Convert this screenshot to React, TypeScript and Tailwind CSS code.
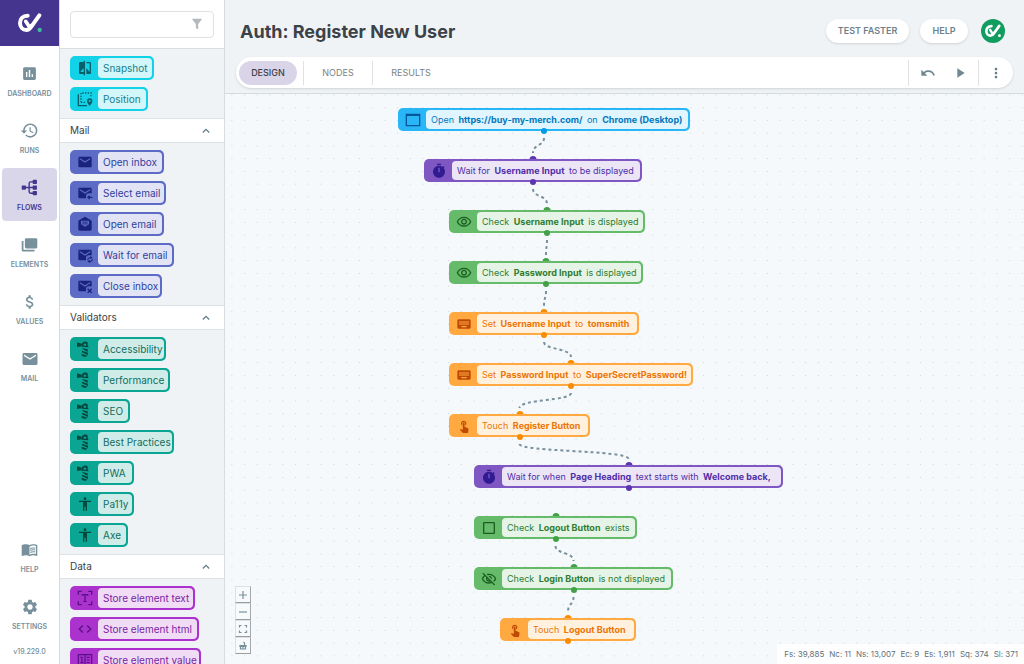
import type { ReactNode } from 'react'
import {
  MdAccessibility,
  MdAttachMoney,
  MdCheckBoxOutlineBlank,
  MdCode,
  MdCompare,
  MdHistory,
  MdInsertChart,
  MdKeyboard,
  MdMail,
  MdMenuBook,
  MdMoreVert,
  MdOutlineVisibility,
  MdOutlineVisibilityOff,
  MdPlayArrow,
  MdSettings,
  MdTouchApp,
  MdUndo,
} from 'react-icons/md'

function Svg({ children, className }: { children: ReactNode; className?: string }) {
  return (
    <svg viewBox="0 0 24 24" width="1em" height="1em" fill="currentColor" className={className} aria-hidden="true">
      {children}
    </svg>
  )
}

const FilterIcon = () => (
  <Svg>
    <path d="M14 12v7.9c0 .3-.1.6-.3.8-.4.4-1 .4-1.4 0l-2-2c-.2-.2-.3-.5-.3-.8V12L4.200 4.600C3.900 4.200 4 3.600 4.400 3.200c.2-.1.4-.2.6-.2h14c.2 0 .4.1.6.2.4.4.5 1 .2 1.400L14 12z" />
  </Svg>
)

const FlowsIcon = () => (
  <Svg>
    <rect x="1" y="9" width="6" height="6" rx="1" />
    <rect x="16.500" y="1" width="6" height="6" rx="1" />
    <rect x="16.500" y="9" width="6" height="6" rx="1" />
    <rect x="16.500" y="17" width="6" height="6" rx="1" />
    <path d="M6 12h11M17 4h-3.500q-2 0-2 2v12q0 2 2 2H17" fill="none" stroke="currentColor" strokeWidth="2" />
  </Svg>
)

const ElementsIcon = () => (
  <Svg>
    <rect x="5.500" y="3" width="17.500" height="14.500" rx="2" />
    <path d="M1 7h2.500v12.500h15.500V22H3q-2 0-2-2z" />
  </Svg>
)

const WindowIcon = () => (
  <Svg>
    <path d="M2 3.500h20v17H2zM2 5h20" fill="none" stroke="currentColor" strokeWidth="2" />
  </Svg>
)

const TimerIcon = () => (
  <Svg>
    <path d="M19.030 7.390l1.420-1.420c-.45-.51-.9-.97-1.410-1.410L17.620 6C16.070 4.740 14.120 4 12 4c-4.970 0-9 4.030-9 9s4.030 9 9 9c5 0 9-4.030 9-9 0-2.120-.74-4.070-1.970-5.610M13 14h-2V7h2v7m2-13H9v2h6V1z" />
  </Svg>
)

const PositionIcon = () => (
  <Svg>
    <path d="M2 5v17h13" fill="none" stroke="currentColor" strokeWidth="2" />
    <path d="M6 17V3h15v7M6 17h7" fill="none" stroke="currentColor" strokeWidth="2" strokeDasharray="2 2" />
    <path d="M19 11a4 4 0 0 0-4 4c0 3 4 7.500 4 7.500s4-4.500 4-7.500a4 4 0 0 0-4-4m0 5.500a1.500 1.500 0 1 1 0-3 1.500 1.500 0 0 1 0 3" />
  </Svg>
)

const ENVELOPE = 'M20 4H4a2 2 0 0 0-2 2v12a2 2 0 0 0 2 2h9.500v-3.500a4 4 0 0 1 4-4H22V6a2 2 0 0 0-2-2m0 4-8 5-8-5V6l8 5 8-5z'

const SelectMailIcon = () => (
  <Svg>
    <path d={ENVELOPE} />
    <path d="M19 15v2.500h4v2h-4V22l-4-3.500z" />
  </Svg>
)

const WaitMailIcon = () => (
  <Svg>
    <path d={ENVELOPE} />
    <path d="M16 19.500a3.500 3.500 0 0 1 5-3M23 18a3.500 3.500 0 0 1-5 3.500" fill="none" stroke="currentColor" strokeWidth="1.600" />
    <path d="M20 13.500l3.500 2.500-3.500 2zM19 19l-3.500 2.500L19 24z" />
  </Svg>
)

const CloseMailIcon = () => (
  <Svg>
    <path d={ENVELOPE} />
    <path d="M16 16l6 6M22 16l-6 6" stroke="currentColor" strokeWidth="2.200" />
  </Svg>
)

const OpenMailIcon = () => (
  <Svg>
    <path
      fillRule="evenodd"
      d="M12 1 3 6.500Q2 7 2 8v12a2 2 0 0 0 2 2h16a2 2 0 0 0 2-2V8q0-1-1-1.500zM6 7h12v5.500L12 16 6 12.500zM8 8.500v1.300h8V8.500zm0 2.700v1.300h8v-1.300z"
    />
  </Svg>
)

const LighthouseIcon = () => (
  <Svg>
    <path d="M0 2 7 4v4L0 9z" />
    <path
      fillRule="evenodd"
      d="M7 4l2-2 3-1.500L16 2v5h1v2.500L7 8.500zM10 4v3h3.500V4z"
    />
    <path d="M8 10.500l8 2v4l-7-4zM7.500 14.500l9 3v3.500L7.500 17zM7 19l9 3-4 2-5-2z" />
  </Svg>
)

const TextIcon = () => (
  <Svg>
    <path d="M2 7V2h5M17 2h5v5M22 17v5h-5M7 22H2v-5" fill="none" stroke="currentColor" strokeWidth="2" />
    <path d="M7 6h10v3h-1.500l-.5-1h-2v8.500h1.500V18h-5v-1.500H11V8H9l-.5 1H7z" />
  </Svg>
)

const ValueIcon = () => (
  <Svg>
    <path d="M2 4h20v16H2zM12 4v16M5 8h2.500v8M5 16h5M14.500 8H19M14.500 12H19M14.500 16H19" fill="none" stroke="currentColor" strokeWidth="1.800" />
  </Svg>
)

function BrandMark({ className, dot }: { className?: string; dot: string }) {
  return (
    <svg viewBox="0 0 72 60" className={className} aria-hidden="true">
      <path
        d="M29 8C14 8 6 18 6 30c0 12 8 21 19 21 7 0 11-4 15-10L64 7"
        fill="none"
        stroke="#fff"
        strokeWidth="12"
        strokeLinecap="round"
        strokeLinejoin="round"
      />
      <path d="M23 25l8 12" fill="none" stroke="#fff" strokeWidth="11" strokeLinecap="round" />
      <path d="M28 40l10-8 4 6-10 12z" fill="#fff" />
      <circle cx="65" cy="51" r="6.500" fill={dot} />
    </svg>
  )
}

const NAV_TOP = [
  { label: 'DASHBOARD', icon: <MdInsertChart /> },
  { label: 'RUNS', icon: <MdHistory className="text-[19px]" /> },
  { label: 'FLOWS', icon: <FlowsIcon />, active: true },
  { label: 'ELEMENTS', icon: <ElementsIcon /> },
  { label: 'VALUES', icon: <MdAttachMoney className="text-lg" /> },
  { label: 'MAIL', icon: <MdMail className="text-lg" /> },
]

const NAV_BOTTOM = [
  { label: 'HELP', icon: <MdMenuBook /> },
  { label: 'SETTINGS', icon: <MdSettings className="text-lg" /> },
]

type Tone = { frame: string; body: string; icon: string }

const TONES: Record<string, Tone> = {
  cyan: { frame: 'bg-[#12d2e8]', body: 'bg-[#d2f6fa] text-[#17808a]', icon: 'text-[#075f69]' },
  indigo: { frame: 'bg-[#5c6bc5]', body: 'bg-[#e2e4f5] text-[#303f9f]', icon: 'text-[#1a237e]' },
  teal: { frame: 'bg-[#0aa593]', body: 'bg-[#cfece8] text-[#126d5d]', icon: 'text-[#05483f]' },
  magenta: { frame: 'bg-[#ab32cc]', body: 'bg-[#f0dcf5] text-[#7b1fa2]', icon: 'text-[#5a108a]' },
}

const SECTIONS = [
  {
    title: '',
    tone: 'cyan',
    items: [
      { label: 'Snapshot', icon: <MdCompare />, width: 'w-[84px]' },
      { label: 'Position', icon: <PositionIcon />, width: 'w-[78px]' },
    ],
  },
  {
    title: 'Mail',
    tone: 'indigo',
    items: [
      { label: 'Open inbox', icon: <MdMail />, width: 'w-[94px]' },
      { label: 'Select email', icon: <SelectMailIcon />, width: 'w-[96px]' },
      { label: 'Open email', icon: <OpenMailIcon />, width: 'w-[94px]' },
      { label: 'Wait for email', icon: <WaitMailIcon />, width: 'w-[104px]' },
      { label: 'Close inbox', icon: <CloseMailIcon />, width: 'w-[92px]' },
    ],
  },
  {
    title: 'Validators',
    tone: 'teal',
    items: [
      { label: 'Accessibility', icon: <LighthouseIcon />, width: 'w-[96px]' },
      { label: 'Performance', icon: <LighthouseIcon />, width: 'w-[100px]' },
      { label: 'SEO', icon: <LighthouseIcon />, width: 'w-[60px]' },
      { label: 'Best Practices', icon: <LighthouseIcon />, width: 'w-[104px]' },
      { label: 'PWA', icon: <LighthouseIcon />, width: 'w-[64px]' },
      { label: 'Pa11y', icon: <MdAccessibility />, width: 'w-[64px]' },
      { label: 'Axe', icon: <MdAccessibility />, width: 'w-[58px]' },
    ],
  },
  {
    title: 'Data',
    tone: 'magenta',
    items: [
      { label: 'Store element text', icon: <TextIcon />, width: 'w-[125px]' },
      { label: 'Store element html', icon: <MdCode />, width: 'w-[129px]' },
      { label: 'Store element value', icon: <ValueIcon />, width: 'w-[131px]' },
    ],
  },
]

const NODE_TONES: Record<string, Tone & { dot: string }> = {
  blue: { frame: 'bg-[#29b6f6]', body: 'bg-[#e1f5fe] text-[#0277bd]', icon: 'text-[#01579b]', dot: 'bg-[#039be5]' },
  purple: { frame: 'bg-[#7e57c2]', body: 'bg-[#ebe5f6] text-[#512da8]', icon: 'text-[#311b92]', dot: 'bg-[#5e35b1]' },
  green: { frame: 'bg-[#66bb6a]', body: 'bg-[#e6f4e7] text-[#2e7d32]', icon: 'text-[#1b5e20]', dot: 'bg-[#43a047]' },
  orange: { frame: 'bg-[#ffa940]', body: 'bg-[#fff1de] text-[#ec7505]', icon: 'text-[#bf4a04]', dot: 'bg-[#fb8c00]' },
}

// bold parts of a step are wrapped in asterisks
const NODES = [
  { text: 'Open *https://buy-my-merch.com/* on *Chrome (Desktop)*', tone: 'blue', icon: <WindowIcon />, x: 173, w: 292 },
  { text: 'Wait for *Username Input* to be displayed', tone: 'purple', icon: <TimerIcon />, x: 199, w: 218 },
  { text: 'Check *Username Input* is displayed', tone: 'green', icon: <MdOutlineVisibility />, x: 224, w: 196 },
  { text: 'Check *Password Input* is displayed', tone: 'green', icon: <MdOutlineVisibility />, x: 224, w: 194 },
  { text: 'Set *Username Input* to *tomsmith*', tone: 'orange', icon: <MdKeyboard />, x: 224, w: 190 },
  { text: 'Set *Password Input* to *SuperSecretPassword!*', tone: 'orange', icon: <MdKeyboard />, x: 224, w: 244 },
  { text: 'Touch *Register Button*', tone: 'orange', icon: <MdTouchApp className="text-sm" />, x: 224, w: 141 },
  { text: 'Wait for when *Page Heading* text starts with *Welcome back,*', tone: 'purple', icon: <TimerIcon />, x: 249, w: 309, last: true },
  { text: 'Check *Logout Button* exists', tone: 'green', icon: <MdCheckBoxOutlineBlank />, x: 249, w: 163 },
  { text: 'Check *Login Button* is not displayed', tone: 'green', icon: <MdOutlineVisibilityOff />, x: 249, w: 199 },
  { text: 'Touch *Logout Button*', tone: 'orange', icon: <MdTouchApp className="text-sm" />, x: 275, w: 136, last: true },
]

const FIRST_TOP = 14
const ROW = 51

const STATS = ['Fs: 39,885', 'Nc: 11', 'Ns: 13,007', 'Ec: 9', 'Es: 1,911', 'Sq: 374', 'Sl: 371']

function NavItem({ label, icon, active }: { label: string; icon: ReactNode; active?: boolean }) {
  return (
    <a
      href="#"
      className={`mx-0.5 flex h-[53px] flex-col items-center justify-center gap-1.5 rounded ${active ? 'bg-[#dad6ea] text-[#45358f]' : 'text-[#78909c]'}`}
    >
      <span className="flex h-5 items-center text-[17px]">{icon}</span>
      <span className="text-[7px] leading-2 font-semibold">{label}</span>
    </a>
  )
}

function StepText({ text }: { text: string }) {
  return (
    <>
      {text.split('*').map((part, i) => (i % 2 ? <b key={i} className="mx-0.5 font-bold">{part}</b> : part))}
    </>
  )
}

function FlowCanvas() {
  return (
    <main className="relative min-h-0 flex-1 overflow-hidden bg-[#f5f9fc]">
      <svg className="absolute inset-0 h-full w-full" aria-hidden="true">
        <defs>
          <pattern id="dots" width="15" height="15" patternUnits="userSpaceOnUse" patternTransform="translate(.5 -5.500) scale(.85)">
            <circle cx="7.500" cy="7.500" r=".7" fill="#c6ced4" />
          </pattern>
        </defs>
        <rect width="100%" height="100%" fill="url(#dots)" />
        {NODES.slice(0, -1).map((n, i) => {
          if (n.last) return null
          const next = NODES[i + 1]
          const x1 = n.x + n.w / 2
          const x2 = next.x + next.w / 2
          const y = FIRST_TOP + i * ROW + 30
          return (
            <path
              key={n.text}
              d={`M${x1} ${y}C${x1} ${y + 8} ${x2} ${y + 6} ${x2} ${y + 15}`}
              fill="none"
              stroke="#78909c"
              strokeWidth="2"
              strokeDasharray="3 3"
            />
          )
        })}
      </svg>
      {NODES.map((n, i) => {
        const tone = NODE_TONES[n.tone]
        return (
          <div key={n.text} className="absolute" style={{ left: n.x, top: FIRST_TOP + i * ROW, width: n.w }}>
            {i > 0 && <span className={`absolute -top-[3px] left-1/2 size-[7px] -translate-x-1/2 rounded-full ${tone.dot}`} />}
            <div className={`relative flex h-[23px] rounded-[5px] p-0.5 ${tone.frame}`}>
              <span className={`flex w-[26px] shrink-0 items-center justify-center text-base ${tone.icon}`}>{n.icon}</span>
              <span className={`flex flex-1 items-center rounded pl-[5px] text-[9px] whitespace-pre ${tone.body}`}>
                <StepText text={n.text} />
              </span>
            </div>
            <span className={`absolute -bottom-[3px] left-1/2 size-1.5 -translate-x-1/2 rounded-full ${tone.dot}`} />
          </div>
        )
      })}

      <div className="absolute bottom-2.5 left-2.5 flex flex-col text-[#78909c]">
        {[
          { name: 'Zoom in', d: 'M12 4v16M4 12h16' },
          { name: 'Zoom out', d: 'M4 12h16' },
          { name: 'Fit view', d: 'M5 9V5h4M15 5h4v4M19 15v4h-4M9 19H5v-4' },
          { name: 'Lock', d: 'M6 11h12v2H6zM6 18h12M7 13v5M17 13v5M12 14v3M15 11V6l-2-2' },
        ].map(c => (
          <button
            key={c.name}
            aria-label={c.name}
            className="flex h-[17px] w-4 items-center justify-center border border-t-[#dde0e2] border-r-[#a5a8aa] border-b-[#9a9da0] border-l-[#dde0e2] bg-[#f7f9fa]"
          >
            <svg viewBox="0 0 24 24" className="size-3" fill="none" stroke="currentColor" strokeWidth="2.400">
              <path d={c.d} />
            </svg>
          </button>
        ))}
      </div>

      <div className="absolute right-0 bottom-0 flex h-5 items-center gap-[5px] bg-white/90 pr-1.5 pl-[7px] text-[8px] text-[#607078]">
        {STATS.map(s => <span key={s}>{s}</span>)}
      </div>
    </main>
  )
}

export default function App() {
  return (
    <div className="flex h-screen overflow-hidden bg-[#eff3f6] font-[Inter,'Open_Sans',sans-serif]">
      <nav className="flex w-[59px] shrink-0 flex-col bg-white">
        <a href="#" aria-label="Home" className="flex h-[46px] items-center justify-center bg-[#45358f]">
          <BrandMark className="h-5 w-6" dot="#3dbf9b" />
        </a>
        <div className="mt-2 flex flex-col gap-1">
          {NAV_TOP.map(n => <NavItem key={n.label} {...n} />)}
        </div>
        <div className="mt-auto flex flex-col gap-1">
          {NAV_BOTTOM.map(n => <NavItem key={n.label} {...n} />)}
        </div>
        <p className="h-6 pt-1.5 text-center text-[7px] leading-3 font-medium text-[#78909c]">v19.229.0</p>
      </nav>

      <aside className="flex w-[166px] shrink-0 flex-col overflow-hidden border-x border-[#d8dcdf]">
        <div className="h-[49px] shrink-0 border-b border-[#dadee1] bg-white px-2.5 pt-2.5">
          <div className="relative">
            <input aria-label="Filter" className="h-[27px] w-full rounded border border-[#dfe1e3] px-2 text-[10px] outline-none" />
            <span className="absolute top-[7px] right-2.5 text-sm text-[#b4b9bd]"><FilterIcon /></span>
          </div>
        </div>
        {SECTIONS.map(section => {
          const tone = TONES[section.tone]
          return (
            <section key={section.tone} className="shrink-0">
              {section.title && (
                <button className="flex h-[25px] w-full items-center justify-between border-y border-[#dde2e5] bg-white pr-3.5 pl-2.5 text-[10px] text-[#3c4144]">
                  {section.title}
                  <svg viewBox="0 0 10 6" className="h-[5px] w-2" fill="none" stroke="#607d8b" strokeWidth="1.600">
                    <path d="M1 5.500l4-4 4 4" />
                  </svg>
                </button>
              )}
              <div className="flex flex-col items-start gap-[7px] px-2.5 py-[7px]">
                {section.items.map(item => (
                  <button key={item.label} className={`flex h-6 rounded-[5px] p-0.5 ${tone.frame} ${item.width}`}>
                    <span className={`flex h-full w-[26px] shrink-0 items-center justify-center text-base ${tone.icon}`}>{item.icon}</span>
                    <span className={`flex h-full flex-1 items-center rounded pl-[5px] text-[10px] whitespace-nowrap ${tone.body}`}>
                      {item.label}
                    </span>
                  </button>
                ))}
              </div>
            </section>
          )
        })}
      </aside>

      <div className="flex min-w-0 flex-1 flex-col">
        <header className="border-b border-[#d5dadd] pb-[5px]">
          <div className="flex h-[57px] items-center gap-[11px] pt-1 pr-[19px] pl-[15px]">
            <h1 className="flex-1 pt-0.5 text-lg font-bold text-[#3c4247]">Auth: Register New User</h1>
            <button className="h-6 w-[83px] rounded-full bg-white text-[9px] font-semibold text-[#6d828d] shadow">TEST FASTER</button>
            <button className="h-6 w-12 rounded-full bg-white text-[9px] font-semibold text-[#6d828d] shadow">HELP</button>
            <button aria-label="Account" className="ml-0.5 flex size-6 items-center justify-center rounded-full bg-[#119c60]">
              <BrandMark className="h-3.5 w-4" dot="#fff" />
            </button>
          </div>
          <div className="mr-[11px] ml-[11px] flex h-[31px] items-center rounded-full bg-white shadow-sm">
            <button className="ml-[3px] h-6 w-[58px] rounded-full bg-[#d9d4e8] text-[9px] font-medium text-[#3c3f4a]">DESIGN</button>
            <button className="ml-1.5 h-6 w-[70px] border-x border-[#dfe1e3] text-[9px] text-[#7c8184]">NODES</button>
            <button className="h-6 w-[76px] text-[9px] text-[#7c8184]">RESULTS</button>
            <div className="ml-auto flex h-[26px] w-[71px] items-center justify-center gap-4 border-x border-[#dfe1e3] text-base text-[#718892]">
              <button aria-label="Undo"><MdUndo /></button>
              <button aria-label="Run"><MdPlayArrow /></button>
            </div>
            <button aria-label="More" className="flex w-[34px] justify-center text-base text-[#607d8b]"><MdMoreVert /></button>
          </div>
        </header>
        <FlowCanvas />
      </div>
    </div>
  )
}
